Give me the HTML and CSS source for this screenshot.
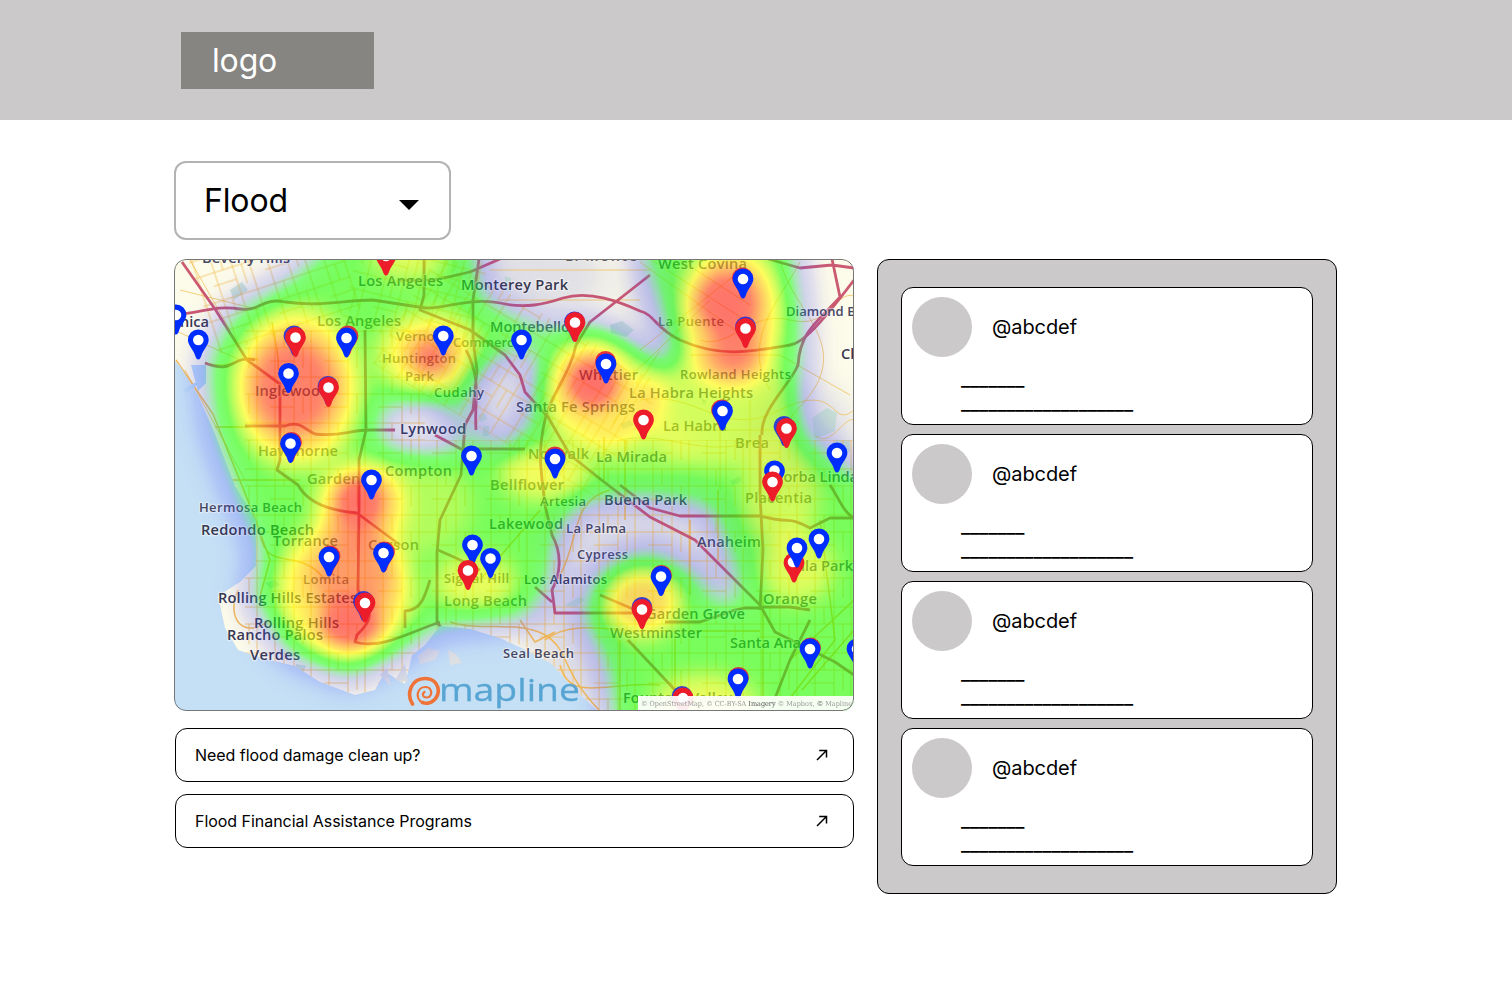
FILE: index.html
```
<!DOCTYPE html>
<html lang="en">
<head>
<meta charset="utf-8">
<title>Flood</title>
<link rel="stylesheet" href="styles.css">
</head>
<body>
<header class="topbar"><div class="logo">logo</div></header>
<main class="page">
  <button class="select" type="button"><span>Flood</span><svg class="caret" width="20" height="10" viewBox="0 0 20 10"><path d="M0 0H20L10 10Z"/></svg></button>
  <div class="columns">
    <section class="main-col">
      <div class="map">
        <svg width="680" height="452" viewBox="174 259 680 452">
          <defs>
            <filter id="soften" filterUnits="userSpaceOnUse" x="60" y="140" width="920" height="700"><feGaussianBlur stdDeviation="11"/></filter>
            <filter id="heat" filterUnits="userSpaceOnUse" x="100" y="180" width="840" height="620" color-interpolation-filters="sRGB">
              <feGaussianBlur stdDeviation="11"/>
              <feColorMatrix values="0 0 0 1 0  0 0 0 1 0  0 0 0 1 0  0 0 0 0 1" result="level"/>
              <feComponentTransfer in="level" result="color">
                <feFuncR type="table" tableValues=".2 .2 .25 .2 .08 .12 .6 1 1 1 1"/>
                <feFuncG type="table" tableValues=".2 .2 .3 .75 1 1 1 1 .65 .2 .08"/>
                <feFuncB type="table" tableValues="1 1 .95 .5 .08 0 0 0 .05 .1 .1"/>
              </feComponentTransfer>
              <feGaussianBlur in="SourceGraphic" stdDeviation="11"/>
              <feComponentTransfer result="alpha"><feFuncA type="table" tableValues="0 .13 .22 .38 .54 .6 .6 .6 .6 .61 .62"/></feComponentTransfer>
              <feComposite in="color" in2="alpha" operator="in"/>
            </filter>
            <pattern id="grid" width="54" height="46" patternUnits="userSpaceOnUse">
              <path d="M5 0V46M24 0V46M41 0V46M0 9H54M0 26H54M0 39H24M14 9V26M33 26V46" class="minor"/>
            </pattern>
            <clipPath id="land"><path d="M174 259H854V711H598L575 690L552 664L530 652L500 638L470 629L440 626L425 645L412 655L405 684L385 672L375 690L355 695L320 682L295 666L262 658L238 650L225 628L218 596L240 582L256 566V520L235 486L215 434L198 395L180 366L174 360Z"/></clipPath>
            <g id="pin"><path d="M0 19.500C-1.600 19.500-2.200 18-2.800 16.500C-4.600 10-10.400 5.300-10.400-.2A10.400 10.400 0 0 1 10.400-.2C10.400 5.300 4.600 10 2.800 16.500C2.200 18 1.600 19.500 0 19.500Z"/></g>
          </defs>
          <rect x="174" y="259" width="680" height="452" fill="#c5dff5"/>
          <g clip-path="url(#land)">
            <rect x="174" y="259" width="680" height="452" fill="#fdfbe9"/>
            <g class="tint"><ellipse cx="530" cy="275" rx="80" ry="35"/><ellipse cx="490" cy="400" rx="65" ry="55"/><ellipse cx="660" cy="305" rx="35" ry="60"/><ellipse cx="800" cy="440" rx="55" ry="60"/><ellipse cx="660" cy="540" rx="120" ry="60"/><ellipse cx="580" cy="640" rx="50" ry="70"/></g>
            <g class="park"><path d="M230 290l12-8 6 8-14 10z M812 418l15-10 10 5-2 18-20 8z M835 440h15v12h-12z M610 325l12-4 12 9-8 7-15-4z M505 276l6 2v14l-6-2z M478 415l7-2 2 6-6 3z M483 426h6v10h-6z M265 583l10-3 5 5-9 4z M296 664l10 2-2 5-9-3z M565 605l14-8 6 3-12 8z M700 398l7 3-3 4z M620 424l10-4 4 5-11 4z M730 481l10-5 2 5-9 5z"/></g>
            <rect x="245" y="330" width="180" height="380" fill="url(#grid)"/>
            <rect x="425" y="440" width="429" height="270" fill="url(#grid)"/>
            <rect x="390" y="310" width="260" height="130" fill="url(#grid)" transform="rotate(31 520 370)"/>
            <rect x="200" y="235" width="150" height="100" fill="url(#grid)" transform="rotate(-18 270 285)"/>
            <rect x="350" y="245" width="130" height="95" fill="url(#grid)" transform="rotate(14 410 290)"/>
            <path class="minor" d="M490 270H650M500 300H640M640 262L735 330M650 259L748 322M665 250L750 305M640 350L735 275M635 372L710 300M700 340C730 350 750 310 790 320S835 290 854 296M690 355H780L850 395M640 400C700 390 720 440 780 410S830 430 854 410M620 440C670 430 700 460 760 440M780 259C790 310 850 340 810 395L780 430M815 435C830 450 845 415 854 420M800 262C780 300 740 340 770 390M690 430H780M720 420V490M750 400V500M660 350L610 430M180 290L260 310M174 330L240 360M185 370L245 480M190 260L230 330"/>
            <path class="minor wide" d="M176 360L213 414 253 513 270 560 259 600M230 480H300M215 427H250M260 532C265 575 300 545 325 580M238 590C225 620 245 640 270 620M450 622C480 632 520 620 545 635S560 670 600 711M545 640C570 620 610 630 635 631H760M560 665C570 705 610 680 660 685M620 640V710M675 630V710M763 595V700M820 520L835 640 780 711M790 660L854 600M802 690L854 630M520 620L535 642 555 632M560 575C580 540 570 500 610 490M480 580L540 510M604 437V480M625 440V520M690 520V595M718 490V560M272 322C275 345 280 355 278 370M205 363C240 372 235 352 258 360"/>
            <g class="major">
              <path d="M182 262L215 309 247 360 280 384V460L277 470 298 485C305 498 320 510 357 513L400 545M438 550C450 555 465 562 480 570M600 595L640 612"/>
              <path d="M174 315C205 312 215 305 240 309C260 312 262 297 285 302C320 307 345 300 373 300L425 308C440 310 470 297 500 303C525 309 545 304 563 298C590 290 620 302 640 311C655 315 655 328 680 340C720 358 750 352 790 345C803 343 820 325 854 280"/>
              <path d="M205 363C235 375 230 355 255 360M245 426H285C300 420 305 430 315 434C340 437 350 430 370 430H395M435 435L461 449H525"/>
              <path d="M424 259V295L420 310 470 330 505 355 520 375 525 392 548 417 570 455 608 485 650 517 695 540 760 605 775 632 835 662 854 675"/>
              <path d="M400 280C440 282 450 276 470 272L500 259M479 259L473 300V340L477 370 473 410 465 425 461 475 440 520 437 552V625M365 330L366 430 359 460V508L358 590C368 610 378 615 357 635L355 642C380 650 410 632 440 622M466 350C482 380 474 400 476 430M430 580C424 600 420 610 405 611V628M437 622L450 640"/>
              <path d="M576 345C570 375 550 395 545 420C538 450 540 465 545 505L552 535C563 555 560 575 552 590L555 613H640M535 587L552 602M665 622H700L735 610 745 608H763M763 607H790L810 610M576 345L590 322 650 275"/>
              <path d="M620 485L650 508 680 516H760C795 525 785 515 810 528L830 518H854M628 640L675 690M760 435V495L763 550 760 610M762 435C760 410 790 385 798 365C800 330 820 320 840 297L832 259M768 259L800 268 832 265 854 268M810 620L790 660 770 711M830 485C840 500 843 512 854 518"/>
            </g>
          </g>
          <path d="M418 656l10-8 12 3-5 9-15 4zM448 650l8 4 6 9-12 2zM395 680l10-16 3 18zM380 675l7-7 4 18z" fill="#dfe2e2"/>
          <path d="M191 365h15v18l-8 8zM183 390l13-8 2 3-12 8z" fill="#b9d8f4"/>
          <g class="labels">
            <text x="202" y="263" textLength="88">Beverly Hills</text>
            <text x="358" y="286" textLength="85">Los Angeles</text>
            <text x="461" y="290" textLength="107" class="dark">Monterey Park</text>
            <text x="317" y="326" textLength="84" class="soft">Los Angeles</text>
            <text x="180" y="327" textLength="29" class="dark">nica</text>
            <text x="490" y="332" textLength="80">Montebello</text>
            <text x="396" y="341" textLength="47" class="small soft">Vernon</text>
            <text x="453" y="347" textLength="68" class="small soft">Commerce</text>
            <text x="382" y="363" textLength="74" class="small soft">Huntington</text>
            <text x="405" y="381" textLength="29" class="small soft">Park</text>
            <text x="434" y="397" textLength="50" class="small">Cudahy</text>
            <text x="255" y="396" textLength="74">Inglewood</text>
            <text x="258" y="456" textLength="80" class="soft">Hawthorne</text>
            <text x="400" y="434" textLength="66" class="dark">Lynwood</text>
            <text x="385" y="476" textLength="67">Compton</text>
            <text x="307" y="484" textLength="62" class="soft">Gardena</text>
            <text x="199" y="512" textLength="103" class="small">Hermosa Beach</text>
            <text x="201" y="535" textLength="113" class="dark">Redondo Beach</text>
            <text x="273" y="546" textLength="65">Torrance</text>
            <text x="368" y="550" textLength="51" class="soft">Carson</text>
            <text x="303" y="584" textLength="46" class="small soft">Lomita</text>
            <text x="218" y="603" textLength="139" class="dark">Rolling Hills Estates</text>
            <text x="254" y="628" textLength="85" class="dark">Rolling Hills</text>
            <text x="227" y="640" textLength="96" class="dark">Rancho Palos</text>
            <text x="250" y="660" textLength="50" class="dark">Verdes</text>
            <text x="579" y="380" textLength="59">Whittier</text>
            <text x="516" y="412" textLength="119">Santa Fe Springs</text>
            <text x="629" y="398" textLength="124">La Habra Heights</text>
            <text x="663" y="431" textLength="64" class="soft">La Habra</text>
            <text x="528" y="459" textLength="61" class="soft">Norwalk</text>
            <text x="596" y="462" textLength="71">La Mirada</text>
            <text x="490" y="490" textLength="74" class="soft">Bellflower</text>
            <text x="540" y="506" textLength="46" class="small">Artesia</text>
            <text x="604" y="505" textLength="83" class="dark">Buena Park</text>
            <text x="489" y="529" textLength="74">Lakewood</text>
            <text x="566" y="533" textLength="60" class="small">La Palma</text>
            <text x="577" y="559" textLength="51" class="small">Cypress</text>
            <text x="444" y="583" textLength="65" class="small soft">Signal Hill</text>
            <text x="524" y="584" textLength="83" class="small dark">Los Alamitos</text>
            <text x="444" y="606" textLength="83" class="soft">Long Beach</text>
            <text x="503" y="658" textLength="71" class="small">Seal Beach</text>
            <text x="610" y="638" textLength="92">Westminster</text>
            <text x="646" y="619" textLength="99">Garden Grove</text>
            <text x="697" y="547" textLength="64">Anaheim</text>
            <text x="763" y="604" textLength="54">Orange</text>
            <text x="730" y="648" textLength="71">Santa Ana</text>
            <text x="623" y="703" textLength="109">Fountain Valley</text>
            <text x="788" y="571" textLength="65">Villa Park</text>
            <text x="745" y="503" textLength="67" class="soft">Placentia</text>
            <text x="775" y="482" textLength="83">Yorba Linda</text>
            <text x="735" y="448" textLength="34" class="soft">Brea</text>
            <text x="680" y="379" textLength="111" class="small">Rowland Heights</text>
            <text x="658" y="326" textLength="66" class="small soft">La Puente</text>
            <text x="658" y="269" textLength="89">West Covina</text>
            <text x="786" y="316" textLength="83" class="small">Diamond Bar</text>
            <text x="841" y="359" textLength="75" class="dark">Chino Hills</text>
            <text x="565" y="261" textLength="72" class="soft">El Monte</text>
          </g>
          <g filter="url(#heat)">
            <path filter="url(#soften)" fill-rule="evenodd" fill-opacity=".5" d="M345 225H475L485 298 545 325 600 320 640 365H668L664 330 630 225H793L803 300 806 370 793 405 815 440 890 495V790H615L605 670 575 612 600 563 650 545 700 570 720 605 740 600 722 545 708 508 650 500 590 503 560 530 552 590 530 622 440 630 400 657 350 682 285 655 248 600 258 550 235 500 210 430 203 360 230 310 290 275Z M380 410L435 404 470 432 440 452 385 445Z M475 370L540 345 530 415 505 447 472 430Z"/>
            <ellipse cx="408" cy="254" rx="38" ry="25" fill-opacity=".3"/>
            <ellipse cx="297" cy="388" rx="64" ry="80" fill-opacity=".45"/>
            <ellipse cx="294" cy="387" rx="44" ry="51" fill-opacity=".66"/>
            <ellipse cx="430" cy="354" rx="52" ry="42" fill-opacity=".4"/>
            <ellipse cx="431" cy="356" rx="22" ry="20" fill-opacity=".75"/>
            <ellipse cx="602" cy="392" rx="62" ry="58" fill-opacity=".43"/>
            <ellipse cx="593" cy="383" rx="26" ry="25" fill-opacity=".97"/>
            <ellipse cx="731" cy="315" rx="52" ry="72" fill-opacity=".47"/>
            <ellipse cx="728" cy="302" rx="31" ry="31" fill-opacity=".84"/>
            <ellipse cx="735" cy="345" rx="26" ry="28" fill-opacity=".62"/>
            <ellipse cx="360" cy="505" rx="45" ry="44" fill-opacity=".44"/>
            <ellipse cx="359" cy="501" rx="23" ry="23" fill-opacity=".96"/>
            <ellipse cx="345" cy="590" rx="68" ry="72" fill-opacity=".45"/>
            <ellipse cx="352" cy="578" rx="42" ry="40" fill-opacity=".5"/>
            <ellipse cx="351" cy="624" rx="30" ry="23" fill-opacity=".88"/>
            <ellipse cx="412" cy="505" rx="60" ry="50" fill-opacity=".16"/>
            <ellipse cx="475" cy="583" rx="40" ry="28" fill-opacity=".32"/>
            <ellipse cx="545" cy="473" rx="44" ry="26" fill-opacity=".36"/>
            <ellipse cx="642" cy="602" rx="38" ry="34" fill-opacity=".52"/>
            <ellipse cx="722" cy="410" rx="80" ry="58" fill-opacity=".25"/>
            <ellipse cx="780" cy="494" rx="38" ry="52" fill-opacity=".25"/>
            <ellipse cx="797" cy="568" rx="36" ry="34" fill-opacity=".3"/>
            <ellipse cx="705" cy="703" rx="52" ry="28" fill-opacity=".33"/>
            <ellipse cx="640" cy="448" rx="55" ry="28" fill-opacity=".12"/>
          </g>
          <g class="behind">
            <g fill="#1b2fe0"><use href="#pin" x="294" y="336"/><use href="#pin" x="328" y="386.500"/><use href="#pin" x="745.500" y="327"/><use href="#pin" x="784" y="426.500"/><use href="#pin" x="363.500" y="601.500"/><use href="#pin" x="642" y="607.500"/><use href="#pin" x="682" y="696.500"/><use href="#pin" x="574.500" y="322"/></g>
            <g fill="#e01c38"><use href="#pin" x="348" y="336"/><use href="#pin" x="291.500" y="442.500"/><use href="#pin" x="605.500" y="361.500"/><use href="#pin" x="555" y="457"/><use href="#pin" x="721.500" y="410"/><use href="#pin" x="330" y="556"/><use href="#pin" x="384.500" y="552"/><use href="#pin" x="661.500" y="575.500"/><use href="#pin" x="810.500" y="648"/><use href="#pin" x="738.500" y="677.500"/><use href="#pin" x="742.500" y="278"/></g>
          </g>
          <g fill="#ed1c2a">
            <use href="#pin" x="386" y="256"/><use href="#pin" x="295.500" y="337.500"/><use href="#pin" x="328.500" y="387.500"/><use href="#pin" x="575" y="322.500"/><use href="#pin" x="745.500" y="328.500"/><use href="#pin" x="643.500" y="420"/><use href="#pin" x="786.500" y="428.500"/><use href="#pin" x="365" y="603"/><use href="#pin" x="642" y="609.500"/><use href="#pin" x="794" y="563"/><use href="#pin" x="683" y="698"/>
          </g>
          <circle cx="793" cy="562" r="5.300" fill="#fff"/>
          <g fill="#002dff">
            <use href="#pin" x="176" y="315"/><use href="#pin" x="198.300" y="340"/><use href="#pin" x="346.500" y="338"/><use href="#pin" x="288.500" y="373.500"/><use href="#pin" x="290.500" y="443.500"/><use href="#pin" x="371.500" y="480"/><use href="#pin" x="443.300" y="336"/><use href="#pin" x="521.500" y="340"/><use href="#pin" x="606" y="364"/><use href="#pin" x="471.500" y="456"/><use href="#pin" x="555" y="459"/><use href="#pin" x="743" y="279"/><use href="#pin" x="722.500" y="411"/><use href="#pin" x="837" y="453"/><use href="#pin" x="774.500" y="471"/><use href="#pin" x="329" y="557"/><use href="#pin" x="383.500" y="553"/><use href="#pin" x="472.500" y="545"/><use href="#pin" x="490.500" y="558.500"/><use href="#pin" x="661" y="576.500"/><use href="#pin" x="797" y="548"/><use href="#pin" x="819" y="539"/><use href="#pin" x="810" y="649"/><use href="#pin" x="857" y="649"/><use href="#pin" x="738" y="679"/>
          </g>
          <circle cx="774.500" cy="470.500" r="5.300" fill="#fff"/>
          <g fill="#ed1c2a"><use href="#pin" x="772.500" y="482"/><use href="#pin" x="468" y="570.500"/></g>
          <path class="dots" d="M386 256h0M295.500 337.500h0M328.500 387.500h0M575 322.500h0M745.500 328.500h0M643.500 420h0M786.500 428.500h0M365 603h0M642 609.500h0M683 698h0M176 315h0M198.300 340h0M346.500 338h0M288.500 373.500h0M290.500 443.500h0M371.500 480h0M443.300 336h0M521.500 340h0M606 364h0M471.500 456h0M555 459h0M743 279h0M722.500 411h0M837 453h0M329 557h0M383.500 553h0M472.500 545h0M490.500 558.500h0M661 576.500h0M797 548h0M819 539h0M810 649h0M857 649h0M738 679h0M772.500 482h0M468 570.500h0"/>
          <path class="swirl" d="M412.500 704C406 694 411 678.500 425 678.500C436 678.500 440 688 437.500 695C435 702 428 704.500 422.500 702.500"/>
          <path class="swirl thin" d="M422.500 702.500C415 699 416.500 686.500 426 687C433.500 688 432.500 698 426 697.500C422.500 697 422 693.500 424.500 692"/>
          <text class="brand" x="439" y="701" textLength="141" lengthAdjust="spacingAndGlyphs">mapline</text>
          <rect x="638" y="696" width="216" height="15" fill="#fff" fill-opacity=".92"/>
          <text class="credit" x="641" y="706" textLength="211" lengthAdjust="spacingAndGlyphs">© OpenStreetMap, © CC-BY-SA <tspan class="strong">Imagery</tspan> © Mapbox, <tspan class="strong">©</tspan> Mapline</text>
        </svg>
      </div>
      <a class="resource"><span>Need flood damage clean up?</span><svg class="arrow" width="12" height="12" viewBox="0 0 12 12"><path d="M1 11L10.200 1.800M3.200 1.500H10.500V8.500"/></svg></a>
      <a class="resource"><span>Flood Financial Assistance Programs</span><svg class="arrow" width="12" height="12" viewBox="0 0 12 12"><path d="M1 11L10.200 1.800M3.200 1.500H10.500V8.500"/></svg></a>
    </section>
    <aside class="feed">
      <article class="post"><div class="author"><i class="avatar"></i><span>@abcdef</span></div><p class="body">_______<br>___________________</p></article>
      <article class="post"><div class="author"><i class="avatar"></i><span>@abcdef</span></div><p class="body">_______<br>___________________</p></article>
      <article class="post"><div class="author"><i class="avatar"></i><span>@abcdef</span></div><p class="body">_______<br>___________________</p></article>
      <article class="post"><div class="author"><i class="avatar"></i><span>@abcdef</span></div><p class="body">_______<br>___________________</p></article>
    </aside>
  </div>
</main>
</body>
</html>
```
FILE: styles.css
```
* { box-sizing: border-box; }
body { margin: 0; background: #fff; color: #000; font-family: Inter, sans-serif; }
.topbar { height: 120px; background: #cbc9ca; padding: 32px 0 0 181px; }
.logo { width: 193px; height: 57px; padding-left: 31px; background: #868582; color: #fff; font-size: 32px; line-height: 57px; letter-spacing: -.15px; }
.page { padding: 41px 0 0 174px; }
.select { display: flex; align-items: center; justify-content: space-between; width: 277px; height: 79px; padding: 0 30px 0 28px; border: 2px solid #b3b3b3; border-radius: 12px; background: #fff; color: #000; font: 32px Inter, sans-serif; letter-spacing: -.15px; }
.caret { margin-top: 8px; }
.columns { display: flex; align-items: flex-start; gap: 23px; margin-top: 19px; }
.main-col { width: 680px; }
.map { position: relative; height: 452px; margin-bottom: 17px; border-radius: 12px; overflow: hidden; }
.map::after { content: ""; position: absolute; inset: 0; border: 1px solid #777; border-radius: 12px; }
.map svg { display: block; }
.resource { display: flex; align-items: center; justify-content: space-between; height: 54px; margin: 0 0 12px 1px; padding: 0 25px 0 19px; border: 1px solid #000; border-radius: 12px; font-size: 16px; letter-spacing: -.04px; }
.arrow { fill: none; stroke: #000; stroke-width: 1.5; }
.feed { width: 460px; height: 635px; padding: 27px 23px; border: 1px solid #000; border-radius: 12px; background: #cbc9ca; display: flex; flex-direction: column; gap: 9px; }
.post { height: 138px; padding: 9px 10px; border: 1px solid #000; border-radius: 12px; background: #fff; }
.author { display: flex; align-items: center; gap: 20px; font-size: 20px; letter-spacing: -.07px; }
.avatar { width: 60px; height: 60px; border-radius: 50%; background: #cbc9ca; }
.body { margin: 10px 0 0 49px; font-size: 20px; line-height: 24px; letter-spacing: -.07px; }

.minor { fill: none; stroke: #f2bd4c; stroke-width: .9; opacity: .8; }
.minor.wide { stroke-width: 1.5; stroke: #f5b545; opacity: .9; }
.major { fill: none; stroke: #c74c68; stroke-width: 2.8; stroke-linejoin: round; opacity: .92; }
.park { fill: #b9dcc8; opacity: .65; }
.tint { fill: #d6d6e4; filter: blur(14px); opacity: .75; }
.labels { font: 600 14.600px "Open Sans", "Noto Sans", sans-serif; fill: #484860; stroke: #fff; stroke-opacity: .45; stroke-width: 2.5px; paint-order: stroke; stroke-linejoin: round; }
.labels .small { font-size: 13px; }
.labels .dark { fill: #38384e; }
.labels .soft { fill: #66605c; stroke-opacity: .15; }
.behind { opacity: .9; }
.dots { fill: none; stroke: #fff; stroke-width: 10.600px; stroke-linecap: round; }
.swirl { fill: none; stroke: #ef7337; stroke-width: 3.600px; stroke-linecap: round; }
.swirl.thin { stroke-width: 2.200px; }
.brand { font: 500 31px "Open Sans", sans-serif; fill: #58a5d3; stroke: #58a5d3; stroke-width: .3px; }
.credit { font: 7px "DejaVu Serif", serif; fill: #999; }
.credit .strong { fill: #555; }
```
